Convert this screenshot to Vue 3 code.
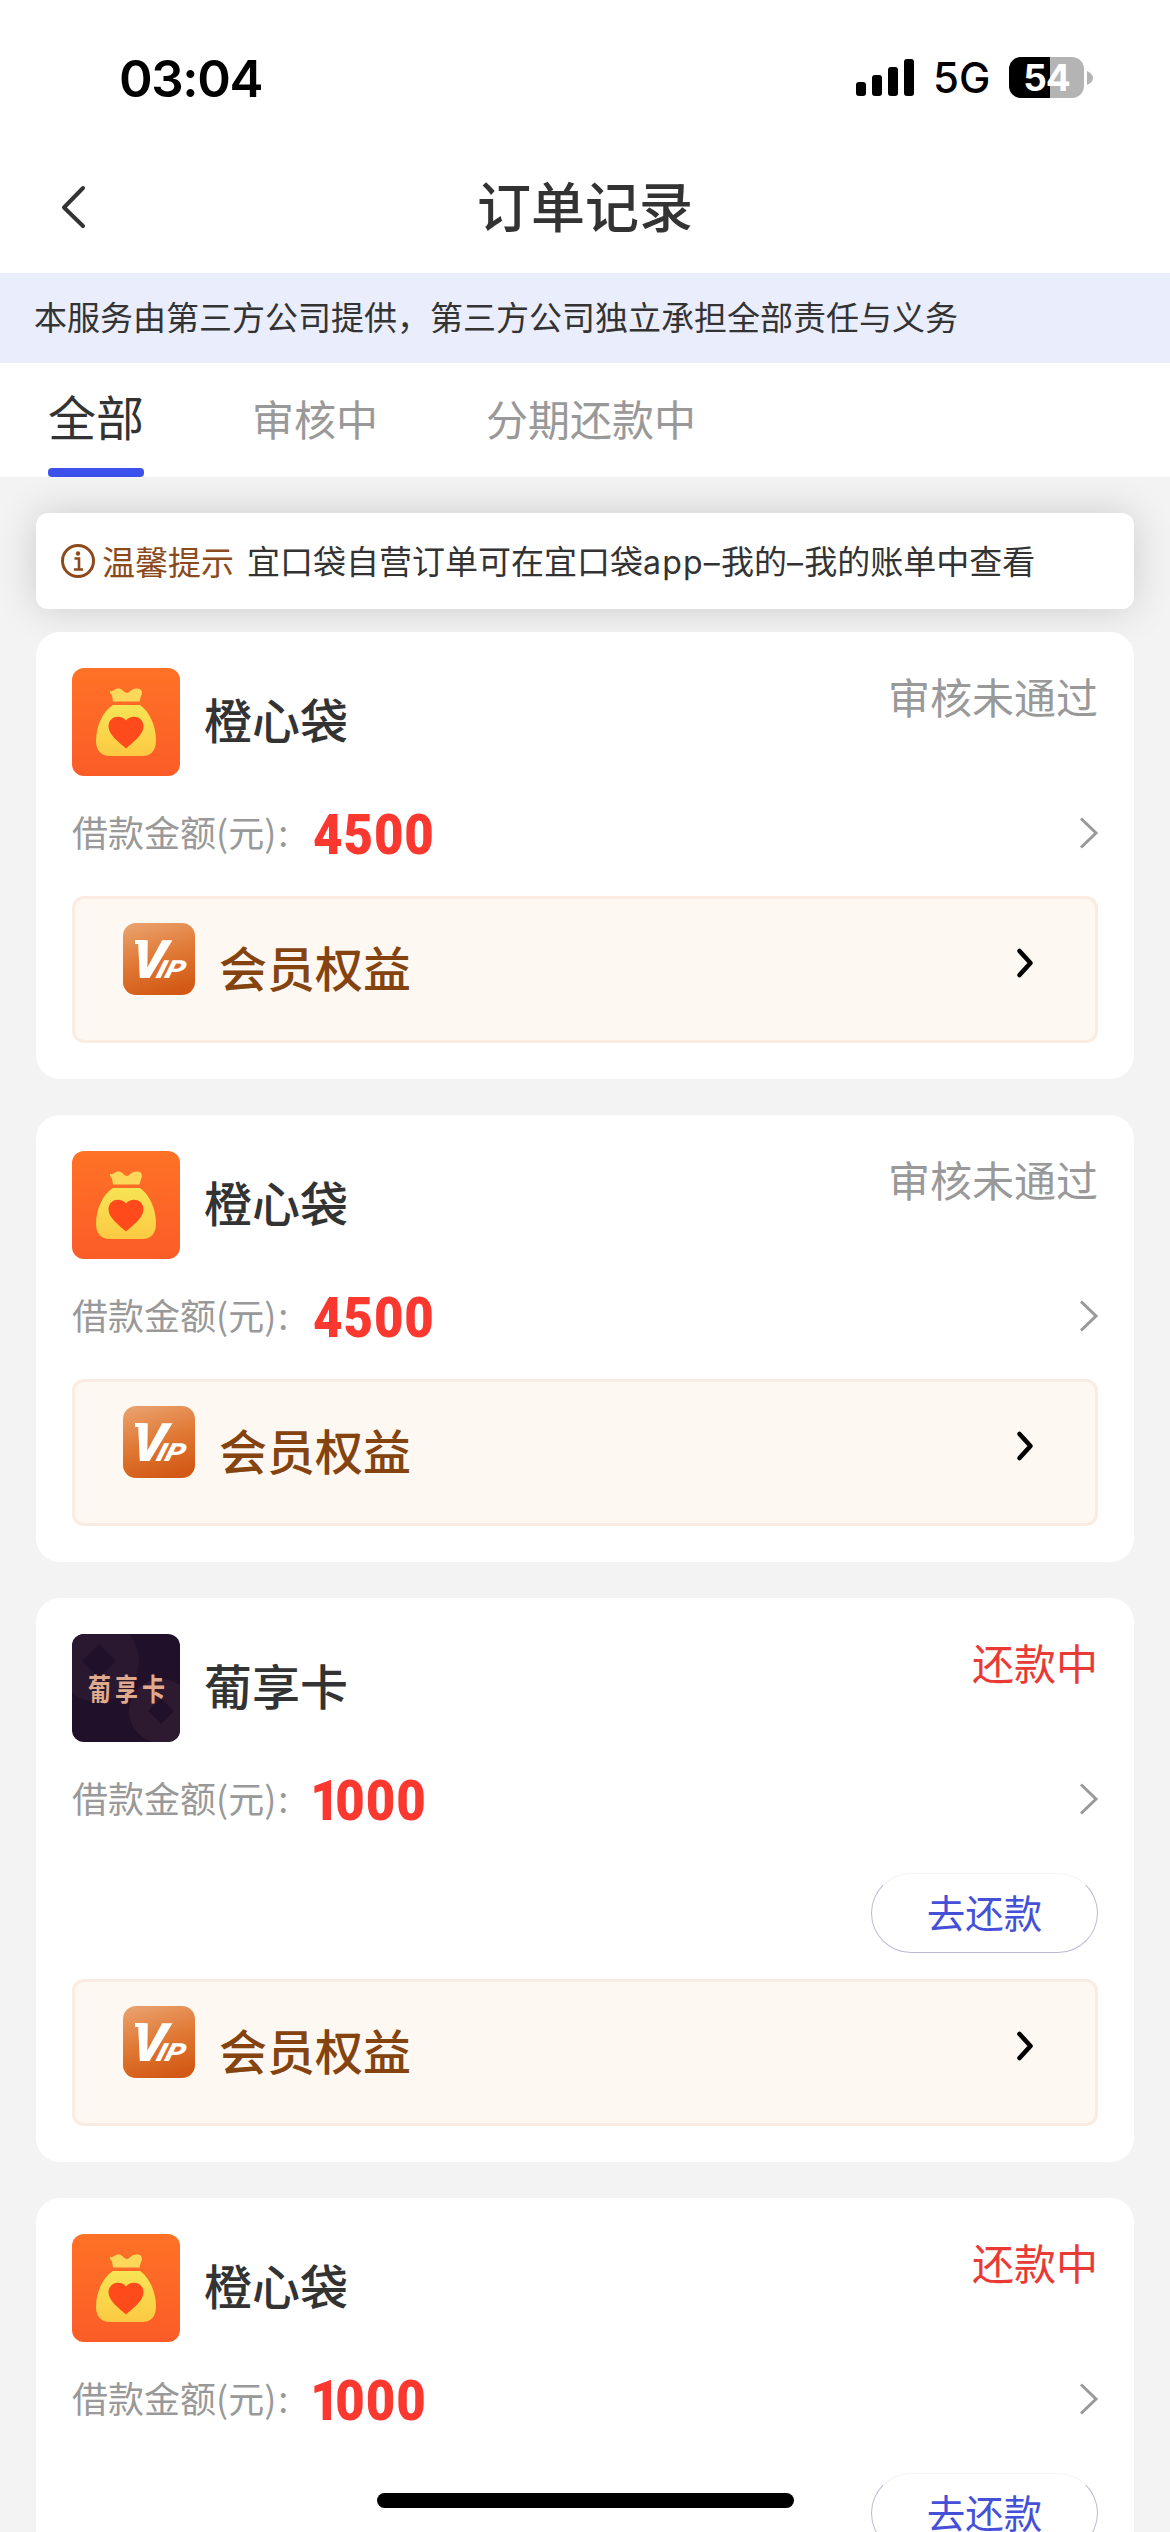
<script setup>
const tabs = ['全部', '审核中', '分期还款中']

const orders = [
  { name: '橙心袋', logo: 'bag', status: '审核未通过', amount: '4500', active: false },
  { name: '橙心袋', logo: 'bag', status: '审核未通过', amount: '4500', active: false },
  { name: '葡享卡', logo: 'card', status: '还款中', amount: '1000', active: true },
  { name: '橙心袋', logo: 'bag', status: '还款中', amount: '1000', active: true },
]
</script>

<template>
  <div class="page">
    <header class="status-bar">
      <span class="time">03:04</span>
      <div class="indicators">
        <svg class="signal" width="58" height="37" viewBox="0 0 58 37">
          <rect x="0" y="23" width="10" height="14" rx="3" />
          <rect x="16" y="16" width="10" height="21" rx="3" />
          <rect x="32" y="8" width="10" height="29" rx="3" />
          <rect x="48" y="0" width="10" height="37" rx="3" />
        </svg>
        <span class="network">5G</span>
        <div class="battery"><span>54</span></div>
        <svg class="battery-tip" width="6" height="14" viewBox="0 0 6 14">
          <path d="M0 0C4 2 6 4 6 7S4 12 0 14Z" fill="#b4b4b4" />
        </svg>
      </div>
    </header>

    <nav class="nav-bar">
      <svg class="back" width="30" height="46" viewBox="0 0 30 46">
        <path d="M25 4 6 23.500 25 42" fill="none" stroke="#333" stroke-width="4" stroke-linecap="round" stroke-linejoin="round" />
      </svg>
      <h1>订单记录</h1>
    </nav>

    <p class="notice">本服务由第三方公司提供，第三方公司独立承担全部责任与义务</p>

    <div class="tabs">
      <div v-for="(tab, i) in tabs" :key="tab" class="tab" :class="{ current: i === 0 }">{{ tab }}</div>
    </div>

    <main>
      <div class="tip">
        <svg width="36" height="36" viewBox="0 0 36 36">
          <circle cx="18" cy="18" r="15.500" fill="none" stroke="#8c4a1c" stroke-width="3" />
          <circle cx="18" cy="10.500" r="2.200" fill="#8c4a1c" />
          <path d="M14.500 15.500H19V26M14 26.500h9" fill="none" stroke="#8c4a1c" stroke-width="2.600" />
        </svg>
        <strong>温馨提示</strong>
        <span>宜口袋自营订单可在宜口袋<i>app–</i>我的<i>–</i>我的账单中查看</span>
      </div>

      <section v-for="(order, i) in orders" :key="i" class="order">
        <div class="head">
          <svg v-if="order.logo === 'bag'" class="logo" viewBox="0 0 108 108">
            <defs>
              <linearGradient :id="'bg' + i" x1="0" y1="0" x2="0" y2="1">
                <stop offset="0" stop-color="#ff7226" />
                <stop offset="1" stop-color="#fb5c27" />
              </linearGradient>
              <linearGradient :id="'sack' + i" x1="0" y1="0" x2="0" y2="1">
                <stop offset="0" stop-color="#f6e455" />
                <stop offset="1" stop-color="#fcca42" />
              </linearGradient>
            </defs>
            <rect width="108" height="108" :fill="`url(#bg${i})`" />
            <path d="M38 23C42 24 43 20 47 20.500S52 25 55 25 59 20 65 20.500C70 20 71 25 69 28L67.500 33.500H41L40 27.500C39 26 37.500 25 38 23Z" fill="#fcd75a" />
            <path d="M41 37H68C77 43 84 58 84 72 84 84 78 88 70 88H38C29 88 24 82 24 73 24 58 31 43 41 37Z" :fill="`url(#sack${i})`" />
            <path d="M54 80.500C48 75 36.500 67 36.500 58.500 36.500 48 49 46 54 52.500 59 46 71.500 48 71.500 58.500 71.500 67 60 75 54 80.500Z" fill="#ff4b1b" />
          </svg>
          <svg v-else class="logo" viewBox="0 0 108 108">
            <rect width="108" height="108" fill="#211029" />
            <circle cx="26" cy="27" r="41" fill="#2a1830" />
            <path d="M27 10 44 27 27 44 10 27Z" fill="#20102a" />
            <circle cx="89" cy="77" r="32" fill="#2d1a30" />
            <path d="M89 64 102 77 89 90 76 77Z" fill="#211029" />
            <text class="logo-text" transform="translate(16 65.500) scale(1 1.280)" x="0 27 54" y="0">葡享卡</text>
          </svg>
          <h2>{{ order.name }}</h2>
          <span class="status" :class="{ active: order.active }">{{ order.status }}</span>
        </div>

        <div class="amount">
          <span class="label">借款金额(元)<b>:</b></span>
          <span class="value" :class="{ one: order.amount[0] === '1' }"><i>{{ order.amount[0] }}</i>{{ order.amount.slice(1) }}</span>
          <svg width="20" height="32" viewBox="0 0 20 32">
            <path d="M2 1.500 17 16 2 30.500" fill="none" stroke="#999" stroke-width="3" />
          </svg>
        </div>

        <div v-if="order.active" class="actions">
          <button>去还款</button>
        </div>

        <div class="benefit">
          <svg class="vip" width="72" height="72" viewBox="0 0 72 72">
            <defs>
              <linearGradient :id="'vip' + i" x1="0.200" y1="0" x2="0.500" y2="1">
                <stop offset="0" stop-color="#eaa06c" />
                <stop offset="0.500" stop-color="#e07a36" />
                <stop offset="1" stop-color="#d35a16" />
              </linearGradient>
            </defs>
            <rect width="72" height="72" rx="13" :fill="`url(#vip${i})`" />
            <rect x="12" y="17" width="10" height="4" fill="#fff" />
            <text transform="translate(7 55) skewX(-7)" font-size="53" textLength="34" lengthAdjust="spacingAndGlyphs">V</text>
            <text transform="translate(32 55) skewX(-16)" font-size="25" textLength="28" lengthAdjust="spacingAndGlyphs">IP</text>
          </svg>
          <span>会员权益</span>
          <svg class="go" width="20" height="32" viewBox="0 0 20 32">
            <path d="M4.500 4 15.500 16 4.500 28" fill="none" stroke="#000" stroke-width="4.600" stroke-linecap="round" stroke-linejoin="round" />
          </svg>
        </div>
      </section>
    </main>

    <div class="home-bar"></div>
  </div>
</template>

<style>
body {
  margin: 0;
  background: #f3f3f3;
}
</style>

<style scoped>
.page {
  position: relative;
  box-sizing: border-box;
  width: 1170px;
  height: 2532px;
  overflow: hidden;
  background: #f3f3f3;
  color: #333;
  font-family: "Noto Sans CJK SC", sans-serif;
}
h1, h2, p {
  margin: 0;
}
i {
  font-style: normal;
}
svg {
  flex: none;
  display: block;
}
.status-bar {
  display: flex;
  justify-content: space-between;
  box-sizing: border-box;
  height: 156px;
  padding: 57px 77px 0 119px;
  background: #fff;
  color: #000;
  font-family: Inter, sans-serif;
}
.time {
  font-size: 51px;
  font-weight: 600;
  line-height: 43px;
  letter-spacing: -1.400px;
}
.indicators {
  display: flex;
  align-items: center;
  height: 41px;
}
.network {
  margin-left: 19px;
  width: 76px;
  font-size: 42px;
  font-weight: 450;
  line-height: 43px;
}
.battery {
  width: 75px;
  height: 41px;
  border-radius: 12px;
  background: linear-gradient(90deg, #000 41px, #b4b4b4 41px);
  color: #fff;
  font-size: 37px;
  font-weight: 700;
  line-height: 41px;
  text-align: center;
  letter-spacing: -1px;
}
.battery-tip {
  margin-left: 3px;
}
.nav-bar {
  display: flex;
  align-items: center;
  height: 117px;
  padding: 0 58px;
  background: #fff;
}
.nav-bar h1 {
  flex: 1;
  margin-right: 30px;
  padding-bottom: 20px;
  font-size: 54px;
  font-weight: 500;
  line-height: 100px;
  text-align: center;
}
.back {
  margin-bottom: 15px;
}
.notice {
  height: 90px;
  padding-left: 34px;
  background: #eaedfb;
  font-size: 33px;
  line-height: 87px;
  white-space: nowrap;
}
.tabs {
  display: flex;
  gap: 108px;
  height: 114px;
  padding-left: 48px;
  background: #fff;
}
.tab {
  color: #999;
  font-size: 42px;
  line-height: 110px;
}
.tab.current {
  display: flex;
  flex-direction: column;
  justify-content: space-between;
  color: #333;
  font-size: 48px;
  line-height: 105px;
}
.tab.current::after {
  content: "";
  height: 9px;
  border-radius: 4px;
  background: #3c50ec;
}
main {
  display: flex;
  flex-direction: column;
  gap: 36px;
  padding: 36px 36px 0;
}
.tip {
  display: flex;
  align-items: center;
  height: 96px;
  margin-bottom: -13px;
  padding-left: 24px;
  border-radius: 12px;
  background: #fff;
  box-shadow: 0 0 40px rgba(0, 0, 0, 0.16);
  font-size: 33px;
  line-height: 92px;
  white-space: nowrap;
}
.tip strong {
  margin: 0 13px 0 6px;
  color: #8c4a1c;
  font-weight: 400;
}
.tip i {
  font-family: Inter, sans-serif;
  font-size: 32px;
  letter-spacing: 1.200px;
}
.order {
  padding: 36px;
  border-radius: 24px;
  background: #fff;
}
.head {
  display: flex;
  height: 108px;
}
.logo {
  width: 108px;
  height: 108px;
  border-radius: 12px;
}
.logo-text {
  fill: #e0aa8c;
  font-size: 23px;
  font-weight: 700;
}
.head h2 {
  flex: 1;
  margin-left: 24px;
  font-size: 48px;
  font-weight: 500;
  line-height: 101px;
}
.status {
  color: #999;
  font-size: 42px;
  line-height: 55px;
}
.status.active {
  color: #e93a36;
}
.amount {
  display: flex;
  align-items: center;
  height: 114px;
}
.label {
  width: 241px;
  padding-bottom: 4px;
  color: #999;
  font-size: 36px;
  line-height: 108px;
}
.label b {
  margin-left: 2px;
  font-weight: 400;
}
.value {
  flex: 1;
  padding-top: 3px;
  color: #fb382f;
  font-family: Roboto, sans-serif;
  font-size: 56px;
  font-weight: 900;
  line-height: 114px;
  letter-spacing: 1px;
  transform: scaleX(0.910);
  transform-origin: left;
}
.value.one i {
  margin: 0 -6px 0 -3px;
}
.amount svg {
  margin-right: -1px;
}
.actions {
  display: flex;
  justify-content: flex-end;
  box-sizing: border-box;
  height: 117px;
  padding-top: 17px;
}
.actions button {
  box-sizing: border-box;
  width: 227px;
  height: 80px;
  padding: 0 0 5px;
  border: 1px solid #b9b9d6;
  border-top-color: #f3f3fa;
  border-radius: 40px;
  background: #fff;
  color: #4450d8;
  font: 38.500px/70px "Noto Sans CJK SC", sans-serif;
}
.benefit {
  display: flex;
  box-sizing: border-box;
  height: 147px;
  margin-top: 6px;
  padding: 24px 60px 0 48px;
  border: 3px solid #fbece1;
  border-radius: 12px;
  background: #fdf8f1;
}
.vip text {
  fill: #fff;
  font-family: Roboto, sans-serif;
  font-style: italic;
  font-weight: 900;
}
.benefit span {
  flex: 1;
  margin-left: 24px;
  color: #84430f;
  font-size: 48px;
  font-weight: 500;
  line-height: 87px;
}
.go {
  margin-top: 24px;
}
.home-bar {
  position: absolute;
  left: 377px;
  bottom: 24px;
  width: 417px;
  height: 15px;
  border-radius: 8px;
  background: #000;
}
</style>
